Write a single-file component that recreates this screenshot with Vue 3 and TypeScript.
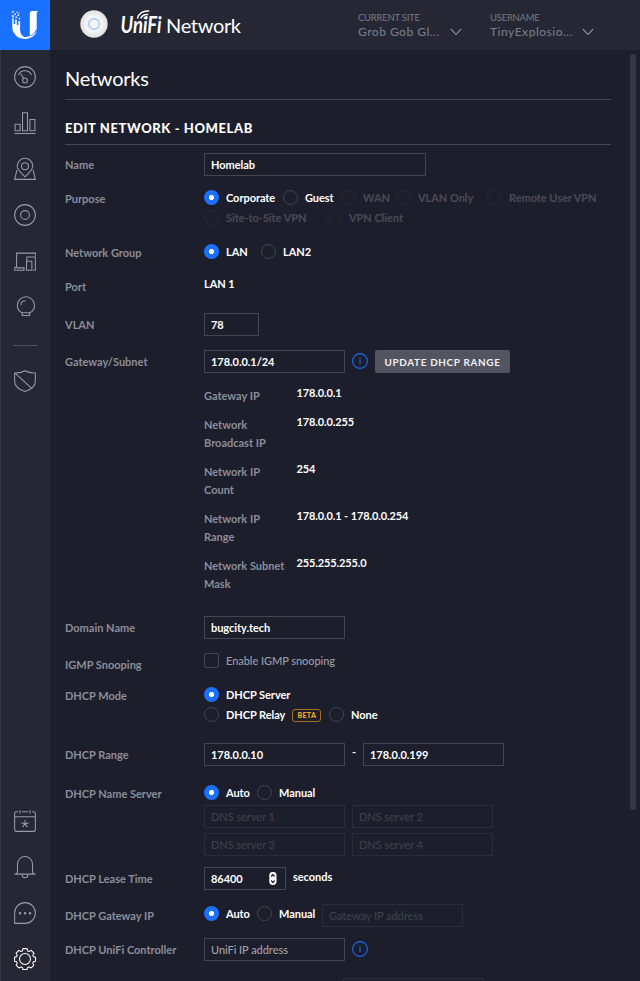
<script setup lang="ts">
import { reactive } from 'vue'

interface Option {
  label: string
  cls: string
  on?: boolean
  off?: boolean
  beta?: boolean
}

const form = reactive({
  name: 'Homelab',
  vlan: '78',
  subnet: '178.0.0.1/24',
  domain: 'bugcity.tech',
  rangeStart: '178.0.0.10',
  rangeEnd: '178.0.0.199',
  lease: '86400',
  controller: '',
})

const purposes: Option[] = [
  { label: 'Corporate', cls: 'w79', on: true },
  { label: 'Guest', cls: 'w58' },
  { label: 'WAN', cls: 'w55', off: true },
  { label: 'VLAN Only', cls: 'w91', off: true },
  { label: 'Remote User VPN', cls: 'w120', off: true },
  { label: 'Site-to-Site VPN', cls: 'w123', off: true },
  { label: 'VPN Client', cls: 'w91', off: true },
]
const groups: Option[] = [
  { label: 'LAN', cls: 'w57', on: true },
  { label: 'LAN2', cls: 'w58' },
]
const modes: Option[] = [
  { label: 'DHCP Server', cls: 'w300', on: true },
  { label: 'DHCP Relay', cls: 'w125', beta: true },
  { label: 'None', cls: 'w58' },
]
const autoManual: Option[] = [
  { label: 'Auto', cls: 'w53', on: true },
  { label: 'Manual', cls: 'w65' },
]

const facts = [
  { label: 'Gateway IP', value: '178.0.0.1' },
  { label: 'Network Broadcast IP', value: '178.0.0.255' },
  { label: 'Network IP Count', value: '254' },
  { label: 'Network IP Range', value: '178.0.0.1 - 178.0.0.254' },
  { label: 'Network Subnet Mask', value: '255.255.255.0' },
]
</script>

<template>
  <div class="app">
    <aside class="side">
      <div class="logo">
        <svg width="50" height="50" viewBox="0 0 50 50" fill="#fff">
          <path d="M12.300 18.500h1.400V24h1.500v-4.500h1.600V25h1.600v-4h1.700v8c0 4.500 1.700 7 5.300 8.500-1 .2-2 .3-3 .3-6-1.200-10.100-4.800-10.100-10.300z" />
          <path d="M29.800 13.500c0-1.700.9-2.500 2.600-2.500h5.200v1c-.8.300-.9 1-.9 2v14.500c-1.400 3.800-3.700 6.200-6.900 7.200z" />
          <path d="M37 30.500c-1.500 5-6 8.400-12 8.400-4.500 0-8-1.500-10.300-4.800 3.600 2.500 6.800 3.200 10.300 2.900C30.400 36.800 34.500 34.500 37 30.500z" />
          <path d="M12 11h1.500v1.500H12zM14.500 13.500H16V15h-1.500zM12.200 15h1.500v2.500h-1.500zM16.500 11.800h1.200V13h-1.200zM17.500 14.500H19V16h-1.500zM15.500 16.500H17V18h-1.500zM18.500 12.500h1v1h-1zM19 17.500h1.100v2H19z" />
        </svg>
      </div>
      <nav class="nav">
        <svg class="ico" viewBox="0 0 24 24"><circle cx="12" cy="12" r="11.300" /><path d="M4.800 9.800A8 8 0 0 1 19.200 9.800M7.300 8.500l3.300 5" /><circle cx="12" cy="15.700" r="2.600" /></svg>
        <svg class="ico" viewBox="0 0 24 24"><path d="M.5 23.400h23M1.200 20.500v-7.200h5.500v7.200zM9.300 20.500V.8h5.400v19.700zM17.300 20.500V8.200h5.500v12.300z" /></svg>
        <svg class="ico" viewBox="0 0 24 24"><path d="M12 20.500C8 16.500 3.500 13 3.500 8.800a8.500 8.500 0 0 1 17 0c0 4.200-4.500 7.700-8.500 11.700z" /><circle cx="12" cy="9" r="3.800" /><path d="M3.200 13L.7 23.300h22.600L20.800 13" /></svg>
        <svg class="ico" viewBox="0 0 24 24"><circle cx="12" cy="12" r="11.300" /><circle cx="12" cy="12" r="4.800" /></svg>
        <svg class="ico devices" viewBox="0 0 24 24"><path d="M2.800 17.800V2.300h20.500v3M2.800 17.800H.8v3.300H11v-2.700H2.800M14 10.500V6.500h9.300v14.600H21M13.700 11.200h5.800v9.900h-5.800z" /></svg>
        <svg class="ico bulb" viewBox="0 0 24 24"><path d="M8.500 19.300C5 17.500 3.600 14.900 3.600 11.300a9.400 9.400 0 0 1 18.800 0c0 3.600-1.400 6.200-4.900 8zM9 19.300v3h8v-3M7.500 11.300c0-3 2-5 5-5" /></svg>
        <span class="rule"></span>
        <svg class="ico" viewBox="0 0 24 24"><path d="M12 .8c3.700 2.200 7.500 2.600 11.300 2.400V12c0 6-4.500 9.300-11.300 11.400C5.200 21.300.7 18 .7 12V3.200C4.500 3.400 8.300 3 12 .8zM1.500 3.700l17.500 16" /></svg>
      </nav>
      <nav class="nav bottom">
        <svg class="ico" viewBox="0 0 24 24"><path d="M4.300 2H2.500A1.800 1.800 0 0 0 .7 3.800v17.700a1.800 1.800 0 0 0 1.800 1.800h19a1.800 1.800 0 0 0 1.800-1.800V3.800A1.800 1.800 0 0 0 21.500 2h-1.800M8.500 2h7M6.500.3v3.500M17.500.3v3.500M.7 7.300h22.600M12 11v4.200M12 15.200l-4-1.300M12 15.200l4-1.300M12 15.200l-2.600 3.500M12 15.200l2.600 3.500" /></svg>
        <svg class="ico" viewBox="0 0 24 24"><path d="M.5 19.800c2.500 0 3.300-1 3.300-3.500V8.800a8.200 8.200 0 0 1 16.400 0v7.500c0 2.500.8 3.500 3.300 3.500zM9 20.800a3 3 0 0 0 6 0" /></svg>
        <svg class="ico" viewBox="0 0 24 24"><path d="M.7 23.300V12A11.300 11.300 0 1 1 12 23.300z" /><path class="dots" d="M6.500 12.300h.01M12 12.300h.01M17.500 12.300h.01" /></svg>
        <svg class="ico active" viewBox="0 0 24 24"><circle cx="12" cy="12" r="6" /><path d="M9.800.7h4.400l.7 2.500 1.600.6 2.300-1.200 3 3-1.300 2.200.6 1.600 2.400.6v4.400l-2.400.5-.6 1.700 1.200 2.200-3 3-2.200-1.200-1.600.6-.7 2.300H9.800l-.7-2.300-1.600-.6-2.200 1.200-3-3 1.200-2.200-.6-1.700-2.300-.5V10l2.300-.6.6-1.600-1.200-2.200 3-3 2.200 1.200 1.600-.6z" stroke-linejoin="round" /></svg>
      </nav>
    </aside>

    <div class="body">
      <header class="top">
        <div class="brand">
          <svg width="200" height="50" viewBox="0 0 200 50">
            <defs>
              <radialGradient id="disc"><stop offset="0.600" stop-color="#f4f4f5" /><stop offset="1" stop-color="#dedee0" /></radialGradient>
            </defs>
            <circle cx="44" cy="24" r="13.700" fill="url(#disc)" />
            <circle cx="44" cy="24" r="5.300" fill="none" stroke="#a4cdf6" stroke-width="1.500" />
            <text class="unifi" x="70.500" y="32.700" textLength="41" lengthAdjust="spacingAndGlyphs">UniFi</text>
            <g fill="none" stroke="#fff" stroke-width="1.500">
              <path d="M87.500 18.500c1-4.800 5.500-8.200 11.800-7.400M90.800 18.500c1-3 3.600-4.500 7.500-4M93.800 18.500c.6-.9 1.800-1.300 3.600-1.200" />
            </g>
            <text class="network" x="116" y="33" textLength="75">Network</text>
          </svg>
        </div>
        <div class="pick site">
          <span class="cap">CURRENT SITE</span>
          <div class="val"><span>Grob Gob Gl...</span><svg width="12" height="8" viewBox="0 0 12 8"><path d="M.8 1l5.200 5.500L11.200 1" /></svg></div>
        </div>
        <div class="pick">
          <span class="cap">USERNAME</span>
          <div class="val"><span>TinyExplosio...</span><svg width="12" height="8" viewBox="0 0 12 8"><path d="M.8 1l5.200 5.500L11.200 1" /></svg></div>
        </div>
      </header>

      <div class="view">
        <main class="content">
          <h1>Networks</h1>
          <h2>EDIT NETWORK - HOMELAB</h2>

          <div class="row h35 p3">
            <label>Name</label>
            <div class="ctl"><input v-model="form.name" class="wide" /></div>
          </div>
          <div class="row h54 p2">
            <label>Purpose</label>
            <div class="ctl wrap">
              <span v-for="o in purposes" :key="o.label" class="opt" :class="[o.cls, { off: o.off }]"><i class="dot" :class="{ on: o.on }"></i>{{ o.label }}</span>
            </div>
          </div>
          <div class="row h35 p2">
            <label>Network Group</label>
            <div class="ctl wrap">
              <span v-for="o in groups" :key="o.label" class="opt" :class="o.cls"><i class="dot" :class="{ on: o.on }"></i>{{ o.label }}</span>
            </div>
          </div>
          <div class="row h36 p1">
            <label>Port</label>
            <div class="ctl"><span class="plain port">LAN 1</span></div>
          </div>
          <div class="row h37 p3">
            <label>VLAN</label>
            <div class="ctl"><input v-model="form.vlan" class="tiny" /></div>
          </div>
          <div class="row h266 p3">
            <label>Gateway/Subnet</label>
            <div>
              <div class="ctl">
                <input v-model="form.subnet" />
                <svg class="info" viewBox="0 0 16 16"><circle cx="8" cy="8" r="7.400" /><path d="M8 6.800v4.400M8 4.700v1.200" /></svg>
                <button type="button">UPDATE DHCP RANGE</button>
              </div>
              <dl class="facts">
                <template v-for="f in facts" :key="f.label">
                  <dt>{{ f.label }}</dt>
                  <dd>{{ f.value }}</dd>
                </template>
              </dl>
            </div>
          </div>
          <div class="row h37 p3">
            <label>Domain Name</label>
            <div class="ctl"><input v-model="form.domain" /></div>
          </div>
          <div class="row h32 p3">
            <label>IGMP Snooping</label>
            <div class="ctl"><span class="check"><i class="box"></i>Enable IGMP snooping</span></div>
          </div>
          <div class="row h58 p2">
            <label>DHCP Mode</label>
            <div class="ctl wrap">
              <span v-for="o in modes" :key="o.label" class="opt" :class="o.cls"><i class="dot" :class="{ on: o.on }"></i>{{ o.label }}<b v-if="o.beta" class="beta">BETA</b></span>
            </div>
          </div>
          <div class="row h40 p3">
            <label>DHCP Range</label>
            <div class="ctl">
              <input v-model="form.rangeStart" /><span class="dash">-</span><input v-model="form.rangeEnd" />
            </div>
          </div>
          <div class="row h84 p2">
            <label>DHCP Name Server</label>
            <div>
              <div class="ctl wrap">
                <span v-for="o in autoManual" :key="o.label" class="opt" :class="o.cls"><i class="dot" :class="{ on: o.on }"></i>{{ o.label }}</span>
              </div>
              <div class="dns">
                <input v-for="n in 4" :key="n" class="off" disabled :placeholder="`DNS server ${n}`" />
              </div>
            </div>
          </div>
          <div class="row h37 p3">
            <label>DHCP Lease Time</label>
            <div class="ctl">
              <div class="number">
                <input v-model="form.lease" />
                <svg class="spin" width="8" height="13" viewBox="0 0 8 13"><rect x=".3" width="7.200" height="13" rx="3.400" fill="#fff" /><path d="M2.200 4.500l1.700-2 1.700 2M2.200 8.500l1.700 2 1.700-2" fill="none" stroke="#222" stroke-width="1.200" /></svg>
              </div>
              <span class="plain secs">seconds</span>
            </div>
          </div>
          <div class="row h34 p3">
            <label>DHCP Gateway IP</label>
            <div class="ctl">
              <span v-for="o in autoManual" :key="o.label" class="opt" :class="o.cls"><i class="dot" :class="{ on: o.on }"></i>{{ o.label }}</span>
              <input class="off" disabled placeholder="Gateway IP address" />
            </div>
          </div>
          <div class="row h40 p3">
            <label>DHCP UniFi Controller</label>
            <div class="ctl">
              <input v-model="form.controller" placeholder="UniFi IP address" />
              <svg class="info" viewBox="0 0 16 16"><circle cx="8" cy="8" r="7.400" /><path d="M8 6.800v4.400M8 4.700v1.200" /></svg>
            </div>
          </div>
          <div class="row h34 p3 next">
            <input class="off" disabled />
          </div>
        </main>
        <div class="scroll"></div>
      </div>
    </div>
  </div>
</template>

<style>
body {
  background: #1d1e2c;
  overflow: hidden;
}
</style>

<style scoped>
* {
  box-sizing: border-box;
}
.app {
  display: flex;
  width: 640px;
  height: 981px;
  overflow: hidden;
  background: #1d1e2c;
  color: #fff;
  font-family: Lato, 'Liberation Sans', sans-serif;
  font-size: 11px;
  line-height: 18px;
}
.side {
  width: 50px;
  flex: none;
  display: flex;
  flex-direction: column;
  background: #252735;
  border-left: 1px solid #343642;
}
.logo {
  height: 50px;
  margin-left: -1px;
  background: #1a70ff;
}
.logo svg {
  display: block;
}
.nav {
  display: flex;
  flex-direction: column;
  align-items: center;
  gap: 24px;
  padding-top: 16px;
  margin-left: -1px;
}
.nav.bottom {
  margin-top: auto;
  padding: 0 0 11px;
}
.ico {
  width: 22px;
  height: 22px;
  fill: none;
  stroke: #979aa8;
  stroke-width: 1.150;
  overflow: visible;
}
.ico.devices {
  margin: 1px 0 -1px;
}
.ico.bulb {
  margin-top: -1px;
}
.ico .dots {
  stroke-width: 2.800;
  stroke-linecap: round;
}
.ico.active {
  stroke: #fff;
}
.rule {
  width: 24px;
  height: 1px;
  background: #4e505d;
  margin: 4px 0 0;
}
.body {
  flex: 1;
  display: flex;
  flex-direction: column;
  min-width: 0;
}
.top {
  height: 50px;
  flex: none;
  display: flex;
  background: #252735;
}
.brand {
  width: 308px;
}
.unifi {
  font: italic 700 22px Lato, sans-serif;
  fill: #fff;
}
.network {
  font: 400 20px Lato, sans-serif;
  fill: #fff;
}
.pick {
  width: 132px;
  padding-top: 11px;
  color: #777a87;
}
.cap {
  display: block;
  font-size: 9.500px;
  line-height: 13px;
}
.site .cap {
  letter-spacing: -0.250px;
}
.pick:last-child .cap {
  letter-spacing: -0.250px;
}
.val {
  display: flex;
  align-items: center;
  justify-content: space-between;
  width: 104px;
  font-size: 12px;
  font-weight: 500;
  line-height: 16px;
  letter-spacing: 0.500px;
  white-space: nowrap;
}
.val svg {
  fill: none;
  stroke: #858793;
  stroke-width: 1.200;
}
.view {
  flex: 1;
  display: flex;
  min-height: 0;
}
.content {
  width: 561px;
  padding-left: 15px;
  height: 931px;
  overflow: hidden;
}
.scroll {
  width: 6px;
  height: 756px;
  margin: 4px 0 0 19px;
  border-radius: 3px;
  background: #343642;
}
h1 {
  height: 50px;
  margin: 0;
  padding-top: 13px;
  border-bottom: 1px solid #444652;
  font-size: 20px;
  font-weight: 400;
  line-height: 30px;
  letter-spacing: -0.250px;
}
h2 {
  height: 45px;
  margin: 0 0 8px;
  padding-top: 18px;
  border-bottom: 1px solid #424a52;
  font-size: 13px;
  font-weight: 900;
  line-height: 20px;
  letter-spacing: 0.600px;
}
.row {
  display: grid;
  grid-template-columns: 139px 1fr;
  align-items: start;
}
.row label {
  color: #8b8d98;
  font-weight: 700;
}
.p1 label { padding-top: 1px; }
.p2 label { padding-top: 2px; }
.p3 label { padding-top: 3px; }
.h32 { height: 32px; }
.h34 { height: 34px; }
.h35 { height: 35px; }
.h36 { height: 36px; }
.h37 { height: 37px; }
.h40 { height: 40px; }
.h54 { height: 54px; }
.h58 { height: 58px; }
.h84 { height: 84px; }
.h266 { height: 266px; }
.ctl {
  display: flex;
  align-items: flex-start;
  font-weight: 700;
  letter-spacing: -0.050px;
}
.wrap {
  flex-wrap: wrap;
}
input {
  display: block;
  width: 141px;
  height: 23px;
  margin: 0;
  padding: 0 6px;
  border: 1px solid #40474f;
  border-radius: 0;
  background: transparent;
  color: #fff;
  font: 700 11px Lato, sans-serif;
  letter-spacing: -0.050px;
  outline: none;
}
input::placeholder {
  color: #a0a1a8;
  font-weight: 500;
  opacity: 1;
}
input.off {
  border-color: #2a2c38;
}
input.off::placeholder {
  color: #3e404c;
}
input.wide {
  width: 222px;
}
input.tiny {
  width: 55px;
}
.opt {
  display: flex;
  align-items: center;
  flex: none;
  height: 20px;
  white-space: nowrap;
}
.w53 { width: 53px; }
.w55 { width: 55px; }
.w57 { width: 57px; }
.w58 { width: 58px; }
.w65 { width: 65px; }
.w79 { width: 79px; }
.w91 { width: 91px; }
.w120 { width: 120px; }
.w123 { width: 123px; }
.w125 { width: 125px; }
.w300 { width: 300px; }
.dot {
  flex: none;
  width: 15px;
  height: 15px;
  margin: 0 7px 1px 0;
  border: 1px solid #40474f;
  border-radius: 50%;
}
.dot.on {
  border: none;
  background: radial-gradient(circle, #fff 0 2.200px, #1a70ff 2.900px);
}
.opt.off {
  color: #494b57;
}
.opt.off .dot {
  border-color: #282a37;
}
.beta {
  width: 29px;
  height: 13px;
  margin-left: 7px;
  border: 1px solid #a8701f;
  border-radius: 3px;
  color: #f5a623;
  font-size: 7px;
  font-weight: 900;
  line-height: 11px;
  letter-spacing: 0.400px;
  text-align: center;
}
.port {
  margin-top: -2px;
}
.info {
  width: 16px;
  height: 16px;
  margin: 3px 7px 0;
  fill: none;
  stroke: #1a6cf5;
  stroke-width: 1.100;
}
button {
  width: 135px;
  height: 23px;
  padding: 0;
  border: 0;
  border-radius: 2px;
  background: #52555f;
  color: #f2f2f4;
  font: 700 9.900px Lato, sans-serif;
  letter-spacing: 0.680px;
  white-space: nowrap;
}
.facts {
  display: grid;
  grid-template-columns: 82px 1fr;
  column-gap: 10px;
  row-gap: 11px;
  margin: 14px 0 0;
}
dt {
  color: #8b8d98;
  font-weight: 700;
}
dd {
  margin: -3px 0 0 0.500px;
  font-weight: 700;
  letter-spacing: -0.120px;
}
.check {
  display: flex;
  align-items: center;
  height: 15px;
  color: #9a9ca5;
  font-weight: 500;
  line-height: 14px;
}
.check .box {
  flex: none;
  width: 15px;
  height: 15px;
  margin-right: 7px;
  border: 1px solid #40474f;
  border-radius: 2px;
}
.dash {
  width: 18px;
  text-align: center;
}
.dns {
  display: grid;
  grid-template-columns: 141px 141px;
  gap: 5px 7px;
  padding-top: 2px;
}
.number {
  position: relative;
}
.number input {
  width: 82px;
}
.spin {
  position: absolute;
  top: 5px;
  right: 9px;
}
.secs {
  margin: 1px 0 0 7px;
}
.next {
  padding-left: 278px;
  display: block;
}
</style>
